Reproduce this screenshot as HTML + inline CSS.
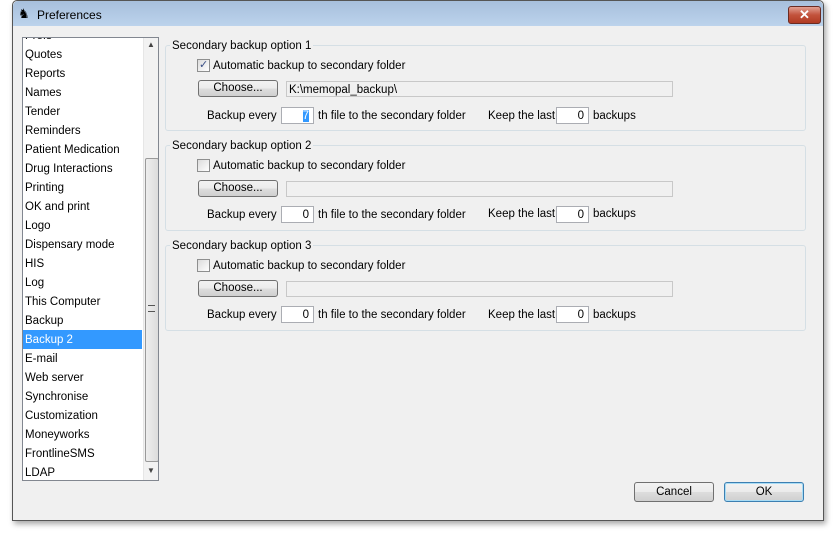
<!DOCTYPE html>
<html><head><style>
body{margin:0;width:837px;height:533px;background:#fff;position:relative;overflow:hidden;font-family:"Liberation Sans",sans-serif;font-size:11.5px;color:#000}
.a{position:absolute}
#win{left:12px;top:0;width:810px;height:519px;border:1px solid #555;border-radius:5px 5px 0 0;background:#f0f0f0;box-shadow:2px 3px 6px rgba(0,0,0,.35)}
#tb{left:0;top:0;width:810px;height:25px;background:linear-gradient(#a7bfdc,#bcd3ec);border-radius:5px 5px 0 0}
#close{left:775px;top:5px;width:31px;height:16px;border:1px solid #6b2b22;border-radius:3px;background:linear-gradient(#e2a092,#c2523c 50%,#b13a22);color:#fff;font-weight:bold;font-size:13px;text-align:center;line-height:16px}
#list{left:22px;top:37px;width:137px;height:444px;background:#fff;border:1px solid #828790;box-sizing:border-box;overflow:hidden}
.it{position:absolute;left:2px;height:19px;line-height:21px;width:117px}
.sel{background:#3399ff;color:#fff}
#sb{left:120px;top:0;width:16px;height:442px;background:#f2f2f2;border-left:1px solid #e6e6e6}
#thumb{left:122px;top:120px;width:12px;height:302px;border:1px solid #9a9a9a;border-radius:2px;background:linear-gradient(90deg,#eee,#dcdcdc)}
.grp{position:absolute;left:165px;width:639px;height:84px;border:1px solid #d5dfe5;border-radius:3px}
.gt{position:absolute;left:4px;top:-6px;background:#f0f0f0;padding:0 2px}
.btn{position:absolute;border:1px solid #707070;border-radius:3px;background:linear-gradient(#f2f2f2,#ebebeb 50%,#dddddd 51%,#cfcfcf);text-align:center;box-sizing:border-box}
.cb{position:absolute;width:13px;height:13px;border:1px solid #8e8f8f;box-sizing:border-box;background:linear-gradient(135deg,#dcdcdc,#fff)}
.tf{position:absolute;background:#fff;border:1px solid #abadb3;box-sizing:border-box;text-align:right;padding-right:4px;line-height:16px}
.dis{background:#f0f0f0;border-color:#c8c8c8;text-align:left}
</style></head><body>
<div id="win" class="a">
 <div id="tb" class="a"><span class="a" style="left:5px;top:5px;font-size:13px">♞</span><span class="a" style="left:24px;top:7px;font-size:12px">Preferences</span><div id="close" class="a">✕</div></div>
</div>
<div id="list" class="a">
 <div class="it" style="top:-12px">Prefs</div>
 <div class="it" style="top:7px">Quotes</div>
 <div class="it" style="top:26px">Reports</div>
 <div class="it" style="top:45px">Names</div>
 <div class="it" style="top:64px">Tender</div>
 <div class="it" style="top:83px">Reminders</div>
 <div class="it" style="top:102px">Patient Medication</div>
 <div class="it" style="top:121px">Drug Interactions</div>
 <div class="it" style="top:140px">Printing</div>
 <div class="it" style="top:159px">OK and print</div>
 <div class="it" style="top:178px">Logo</div>
 <div class="it" style="top:197px">Dispensary mode</div>
 <div class="it" style="top:216px">HIS</div>
 <div class="it" style="top:235px">Log</div>
 <div class="it" style="top:254px">This Computer</div>
 <div class="it" style="top:273px">Backup</div>
 <div class="it sel" style="top:292px;left:0;width:119px;padding-left:2px;box-sizing:border-box">Backup 2</div>
 <div class="it" style="top:311px">E-mail</div>
 <div class="it" style="top:330px">Web server</div>
 <div class="it" style="top:349px">Synchronise</div>
 <div class="it" style="top:368px">Customization</div>
 <div class="it" style="top:387px">Moneyworks</div>
 <div class="it" style="top:406px">FrontlineSMS</div>
 <div class="it" style="top:425px">LDAP</div>
 <div id="sb" class="a"></div>
 <div class="a" style="left:124px;top:2px;font-size:8px;color:#444">▲</div>
 <div class="a" style="left:124px;top:428px;font-size:8px;color:#444">▼</div>
 <div id="thumb" class="a"><div class="a" style="left:2px;top:146px;width:7px;height:5px;border-top:1px solid #555;border-bottom:1px solid #555"></div></div>
</div>

<div class="grp" style="top:45px"><span class="gt">Secondary backup option 1</span></div>
<div class="grp" style="top:145px"><span class="gt">Secondary backup option 2</span></div>
<div class="grp" style="top:245px"><span class="gt">Secondary backup option 3</span></div>

<div class="cb" style="left:197px;top:59px"><span class="a" style="left:1px;top:-2px;color:#3a4f86;font-size:11px">✓</span></div>
<span class="a" style="left:213px;top:60px">Automatic backup to secondary folder</span>
<div class="btn" style="left:198px;top:80px;width:80px;height:17px;line-height:15px">Choose...</div>
<div class="tf dis" style="left:286px;top:81px;width:387px;height:16px;padding-left:2px">K:\memopal_backup\</div>
<span class="a" style="left:207px;top:110px">Backup every</span>
<div class="tf" style="left:281px;top:107px;width:33px;height:17px"><span style="background:#3399ff;color:#fff">7</span></div>
<span class="a" style="left:318px;top:110px">th file to the secondary folder</span>
<span class="a" style="left:488px;top:110px">Keep the last</span>
<div class="tf" style="left:556px;top:107px;width:33px;height:17px">0</div>
<span class="a" style="left:593px;top:110px">backups</span>

<div class="cb" style="left:197px;top:159px"></div>
<span class="a" style="left:213px;top:160px">Automatic backup to secondary folder</span>
<div class="btn" style="left:198px;top:180px;width:80px;height:17px;line-height:15px">Choose...</div>
<div class="tf dis" style="left:286px;top:181px;width:387px;height:16px"></div>
<span class="a" style="left:207px;top:209px">Backup every</span>
<div class="tf" style="left:281px;top:206px;width:33px;height:17px">0</div>
<span class="a" style="left:318px;top:209px">th file to the secondary folder</span>
<span class="a" style="left:488px;top:208px">Keep the last</span>
<div class="tf" style="left:556px;top:206px;width:33px;height:17px">0</div>
<span class="a" style="left:593px;top:208px">backups</span>

<div class="cb" style="left:197px;top:259px"></div>
<span class="a" style="left:213px;top:260px">Automatic backup to secondary folder</span>
<div class="btn" style="left:198px;top:280px;width:80px;height:17px;line-height:15px">Choose...</div>
<div class="tf dis" style="left:286px;top:281px;width:387px;height:16px"></div>
<span class="a" style="left:207px;top:309px">Backup every</span>
<div class="tf" style="left:281px;top:306px;width:33px;height:17px">0</div>
<span class="a" style="left:318px;top:309px">th file to the secondary folder</span>
<span class="a" style="left:488px;top:309px">Keep the last</span>
<div class="tf" style="left:556px;top:306px;width:33px;height:17px">0</div>
<span class="a" style="left:593px;top:309px">backups</span>

<div class="btn" style="left:634px;top:482px;width:80px;height:20px;line-height:19px">Cancel</div>
<div class="btn" style="left:724px;top:482px;width:80px;height:20px;line-height:19px;border-color:#3c7fb1;box-shadow:inset 0 0 0 1px #a8dcf5">OK</div>
</body></html>
